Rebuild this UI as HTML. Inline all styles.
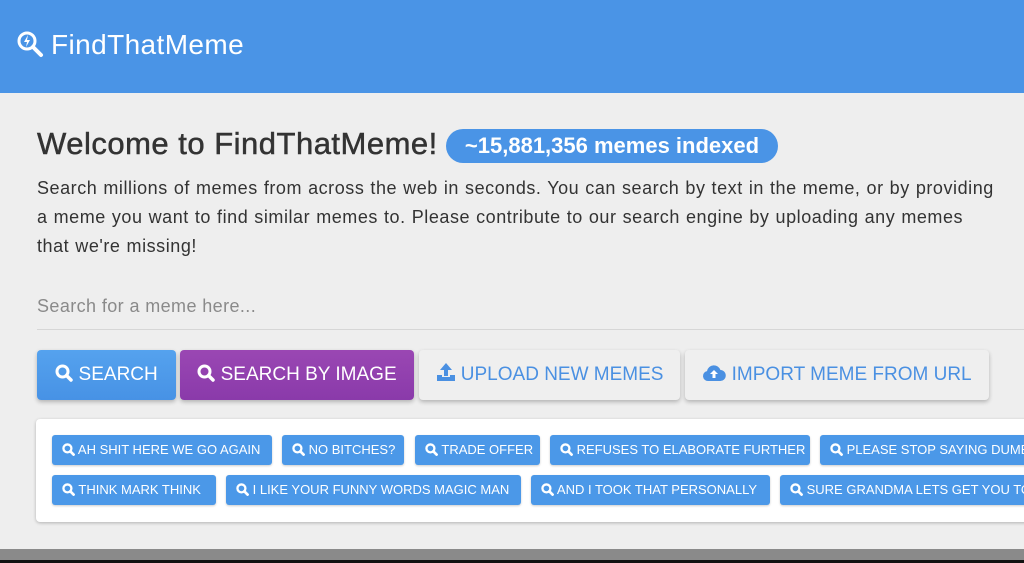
<!DOCTYPE html>
<html><head><meta charset="utf-8"><style>
*{margin:0;padding:0;box-sizing:border-box}
body{width:1024px;height:563px;overflow:hidden;background:#eeeeee;font-family:"Liberation Sans",Arial,sans-serif;position:relative}
.hdr{position:absolute;left:0;top:0;width:1024px;height:93px;background:#4a94e6}
.logo{position:absolute;left:51px;top:29px;color:#fff;font-size:28px;letter-spacing:0.4px}
.panel{position:absolute;left:0;top:93px;width:1024px;height:457px;background:#eeeeee;border-radius:0 0 0 5px}
.bottom{position:absolute;left:0;top:549px;width:1024px;height:14px;background:#8a8a8a}
.bottom2{position:absolute;left:0;top:560px;width:1024px;height:3px;background:#111}
.abs{position:absolute}
h1{position:absolute;left:37px;top:126px;font-size:31px;font-weight:normal;color:#333;-webkit-text-stroke:0.5px #333;letter-spacing:0.5px;white-space:nowrap}
.badge{position:absolute;left:446px;top:129px;width:332px;height:34px;border-radius:17px;background:#4a94e6;color:#fff;font-weight:bold;font-size:22px;line-height:34px;text-align:center}
p{position:absolute;left:37px;top:174px;width:975px;font-size:18px;line-height:29px;color:#333;letter-spacing:0.55px;word-spacing:0.5px}
.ph{position:absolute;left:37px;top:296px;font-size:18px;color:#8a8a8a;letter-spacing:0.4px}
.line{position:absolute;left:37px;top:329px;width:987px;height:1px;background:#d6d6d6}
.btn{position:absolute;top:350px;height:50px;border-radius:4px;font-size:19px;line-height:50px;text-align:center;white-space:nowrap;box-shadow:0 2px 4px rgba(0,0,0,.25)}
.b1{left:37px;width:139px;background:linear-gradient(#55a2ee,#4792e5);color:#fff}
.b2{left:180px;width:234px;background:linear-gradient(#9a47b3,#8a3aaa);color:#fff}
.b3{left:419px;width:261px;background:#efefef;color:#4a90e2}
.b4{left:685px;width:304px;background:#efefef;color:#4a90e2}
.box{position:absolute;left:36px;top:419px;width:1000px;height:103px;background:#fff;border-radius:4px;box-shadow:0 1px 3px rgba(0,0,0,.25)}
.tag{position:absolute;height:30px;border-radius:3px;background:#4b98e8;color:#fff;font-size:13px;line-height:30px;padding-left:10px;white-space:nowrap;overflow:hidden;box-shadow:0 1px 2px rgba(0,0,0,.2)}
svg{vertical-align:-2px}
</style></head><body>
<div class="hdr"></div>
<svg class="abs" style="left:16px;top:30px" width="28" height="28" viewBox="0 0 28 28"><circle cx="11" cy="11" r="8" fill="none" stroke="#fff" stroke-width="3"/><path d="M17 17 L25 25" stroke="#fff" stroke-width="4" stroke-linecap="round"/><path d="M12 5 L8 12 L11 12 L10 17 L14 10 L11 10 Z" fill="#fff"/></svg>
<div class="logo">FindThatMeme</div>
<div class="panel"></div>
<h1>Welcome to FindThatMeme!</h1>
<div class="badge">~15,881,356 memes indexed</div>
<p>Search millions of memes from across the web in seconds. You can search by text in the meme, or by providing<br>a meme you want to find similar memes to. Please contribute to our search engine by uploading any memes<br>that we're missing!</p>
<div class="ph">Search for a meme here...</div>
<div class="line"></div>
<div class="btn b1"><svg width="18" height="18" viewBox="0 0 18 18"><circle cx="7.5" cy="7.5" r="5.5" fill="none" stroke="#fff" stroke-width="3"/><path d="M11.5 11.5L16 16" stroke="#fff" stroke-width="3.5" stroke-linecap="round"/></svg> SEARCH</div>
<div class="btn b2"><svg width="18" height="18" viewBox="0 0 18 18"><circle cx="7.5" cy="7.5" r="5.5" fill="none" stroke="#fff" stroke-width="3"/><path d="M11.5 11.5L16 16" stroke="#fff" stroke-width="3.5" stroke-linecap="round"/></svg> SEARCH BY IMAGE</div>
<div class="btn b3"><svg width="20" height="20" viewBox="0 0 20 20"><path d="M10 1L4 8h4v6h4V8h4z" fill="#4a90e2"/><path d="M1 13h5v2h8v-2h5v6H1z" fill="#4a90e2"/></svg> UPLOAD NEW MEMES</div>
<div class="btn b4"><svg width="24" height="18" viewBox="0 0 24 18"><path d="M6 17a5 5 0 0 1-1-9.9A7 7 0 0 1 18.5 6 5.5 5.5 0 0 1 18 17z" fill="#4a90e2"/><path d="M12 6l-4 4h2.5v4h3v-4H16z" fill="#fff"/></svg> IMPORT MEME FROM URL</div>
<div class="box"></div>
<div id="tags"></div>
<div class="bottom"></div>
<div class="bottom2"></div>
<script>
var q='<svg width="13" height="13" viewBox="0 0 18 18"><circle cx="7.5" cy="7.5" r="5.5" fill="none" stroke="#fff" stroke-width="3.2"/><path d="M11.5 11.5L16 16" stroke="#fff" stroke-width="3.8" stroke-linecap="round"/></svg> ';
var t=[[52,435,220,"AH SHIT HERE WE GO AGAIN"],[282,435,122,"NO BITCHES?"],[415,435,125,"TRADE OFFER"],[550,435,260,"REFUSES TO ELABORATE FURTHER"],[820,435,230,"PLEASE STOP SAYING DUMB THINGS"],[52,475,164,"THINK MARK THINK"],[226,475,295,"I LIKE YOUR FUNNY WORDS MAGIC MAN"],[531,475,239,"AND I TOOK THAT PERSONALLY"],[780,475,270,"SURE GRANDMA LETS GET YOU TO BED"]];
var h='';t.forEach(function(a){h+='<div class="tag" style="left:'+a[0]+'px;top:'+a[1]+'px;width:'+a[2]+'px">'+q+a[3]+'</div>'});
document.getElementById('tags').innerHTML=h;
</script>
</body></html>
